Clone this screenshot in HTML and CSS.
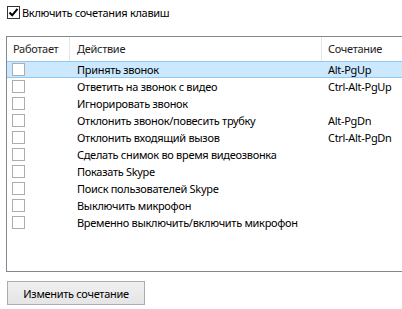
FILE: index.html
```html
<!DOCTYPE html>
<html lang="ru">
<head>
  <meta charset="UTF-8">
  <title>Сочетания клавиш</title>
  <link rel="stylesheet" href="styles.css">
</head>
<body>
  <div class="panel">
    <label class="enable">
      <span class="check checked">
        <svg width="11" height="11" viewBox="0 0 11 11"><path d="M1.5 5.5 L4.2 8.3 L9.5 1.8" fill="none" stroke="#000" stroke-width="2"/></svg>
      </span>
      Включить сочетания клавиш
    </label>

    <!-- Hotkey list -->
    <div class="list">
      <div class="row head">
        <div class="col c1">Работает</div>
        <div class="col c2">Действие</div>
        <div class="col c3">Сочетание</div>
      </div>
      <div class="row selected">
        <div class="col c1"><span class="check"></span></div>
        <div class="col c2">Принять звонок</div>
        <div class="col c3">Alt-PgUp</div>
      </div>
      <div class="row">
        <div class="col c1"><span class="check"></span></div>
        <div class="col c2">Ответить на звонок с видео</div>
        <div class="col c3">Ctrl-Alt-PgUp</div>
      </div>
      <div class="row">
        <div class="col c1"><span class="check"></span></div>
        <div class="col c2">Игнорировать звонок</div>
        <div class="col c3"></div>
      </div>
      <div class="row">
        <div class="col c1"><span class="check"></span></div>
        <div class="col c2">Отклонить звонок/повесить трубку</div>
        <div class="col c3">Alt-PgDn</div>
      </div>
      <div class="row">
        <div class="col c1"><span class="check"></span></div>
        <div class="col c2">Отклонить входящий вызов</div>
        <div class="col c3">Ctrl-Alt-PgDn</div>
      </div>
      <div class="row">
        <div class="col c1"><span class="check"></span></div>
        <div class="col c2">Сделать снимок во время видеозвонка</div>
        <div class="col c3"></div>
      </div>
      <div class="row">
        <div class="col c1"><span class="check"></span></div>
        <div class="col c2">Показать Skype</div>
        <div class="col c3"></div>
      </div>
      <div class="row">
        <div class="col c1"><span class="check"></span></div>
        <div class="col c2">Поиск пользователей Skype</div>
        <div class="col c3"></div>
      </div>
      <div class="row">
        <div class="col c1"><span class="check"></span></div>
        <div class="col c2">Выключить микрофон</div>
        <div class="col c3"></div>
      </div>
      <div class="row">
        <div class="col c1"><span class="check"></span></div>
        <div class="col c2">Временно выключить/включить микрофон</div>
        <div class="col c3"></div>
      </div>
    </div>

    <button class="btn">Изменить сочетание</button>
  </div>
</body>
</html>
```
FILE: styles.css
```css
body {
  margin: 0;
  background: #fff;
  font-family: "Noto Sans", sans-serif;
  font-size: 11px;
  letter-spacing: -0.3px;
  color: #000;
  overflow: hidden;
}

.panel {
  width: 402px;
  height: 309px;
  overflow: hidden;
}

.enable {
  display: flex;
  align-items: center;
  gap: 2px;
  height: 14px;
  padding: 5px 0 0 7px;
}

.check {
  display: inline-flex;
  align-items: center;
  justify-content: center;
  width: 11px;
  height: 11px;
  border: 1px solid #adadad;
  background: #fff;
}

.check.checked {
  border-color: #333;
}

.list {
  width: 420px;
  height: 236px;
  margin: 17px 0 0 6px;
  border: 1px solid #828790;
  box-sizing: border-box;
}

.row {
  display: flex;
  height: 17px;
  align-items: center;
  box-sizing: border-box;
}

.row.head {
  height: 24px;
}

.row.selected {
  background: #cce8ff;
  border-top: 1px solid #8fc8f2;
  border-bottom: 1px solid #8fc8f2;
}

.col {
  white-space: nowrap;
  box-sizing: border-box;
}

.c1 {
  width: 63px;
  padding-left: 5px;
  display: flex;
}

.c2 {
  width: 252px;
  padding-left: 7px;
}

.c3 {
  padding-left: 6px;
}

.head .col {
  height: 24px;
  line-height: 24px;
  color: #1e1e1e;
}

.head .c1 {
  padding-left: 6px;
  border-right: 1px solid #e5e5e5;
}

.head .c2 {
  border-right: 1px solid #e5e5e5;
}

.btn {
  display: block;
  margin: 9px 0 0 7px;
  width: 138px;
  height: 24px;
  font-family: inherit;
  font-size: 11px;
  letter-spacing: -0.3px;
  color: #000;
  background: linear-gradient(#f0f0f0, #e5e5e5);
  border: 1px solid #acacac;
  padding: 0;
}
```
